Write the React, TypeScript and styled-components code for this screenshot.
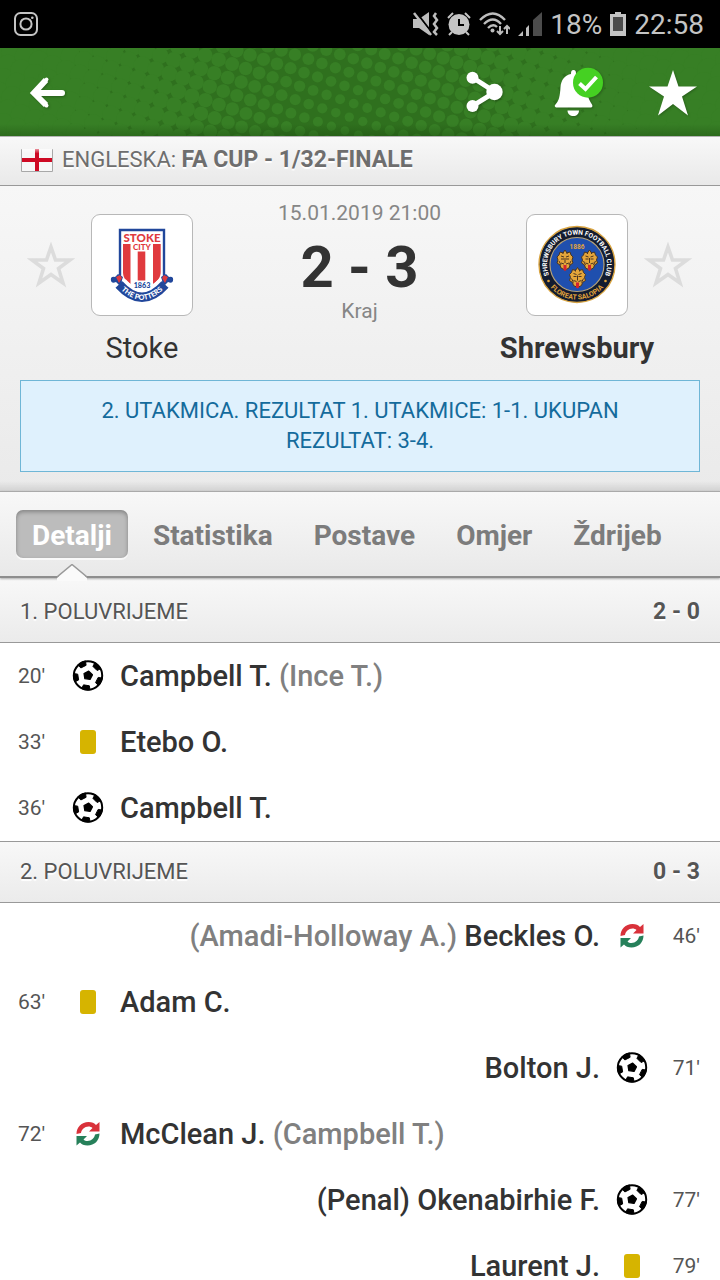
import React from 'react';
import styled, { createGlobalStyle, css } from 'styled-components';

const GlobalStyle = createGlobalStyle`
  *, *::before, *::after { box-sizing: border-box; }
  html, body { margin: 0; background: #fff; }
  body { font-family: Roboto, "Liberation Sans", sans-serif; color: #333; }
  button { font: inherit; color: inherit; background: none; border: 0; padding: 0; cursor: pointer; }
  h1, h2, p, ul { margin: 0; padding: 0; font-weight: inherit; font-size: inherit; }
  ul { list-style: none; }
  svg { display: block; }
`;

const Screen = styled.div`
  display: flex;
  flex-direction: column;
  height: 100vh;
  overflow: hidden;
`;

const Content = styled.main`
  flex: 1;
  min-height: 0;
  overflow-y: auto;
  scrollbar-width: none;
`;

/* ---------- status bar ---------- */

const StatusBar = styled.div`
  flex: none;
  display: flex;
  align-items: center;
  justify-content: space-between;
  height: 48px;
  padding: 0 16px 0 14px;
  background: #000;
  color: #c4c4c4;
  font-size: 28px;
  line-height: 32px;
`;

const StatusGroup = styled.div`
  display: flex;
  align-items: center;
  gap: 8px;
`;

const StatusText = styled.span`
  padding-top: 2px;
`;

/* ---------- header ---------- */

const Header = styled.header`
  flex: none;
  position: relative;
  display: flex;
  align-items: center;
  justify-content: space-between;
  height: 88px;
  padding: 0 23px 0 24px;
  background: #377f25;
  overflow: hidden;
`;

const HeaderPattern = styled.div`
  position: absolute;
  inset: 0;
  svg { width: 100%; height: 100%; }
  &::after {
    content: '';
    position: absolute;
    inset: auto 0 0;
    height: 12px;
    background: linear-gradient(rgba(20, 60, 10, 0), rgba(20, 60, 10, 0.3));
  }
`;

const HeaderActions = styled.div`
  display: flex;
  gap: 46px;
`;

const IconButton = styled.button`
  position: relative;
  width: 48px;
  height: 48px;
  svg { overflow: visible; filter: drop-shadow(1px 1px 1px rgba(0, 0, 0, 0.25)); }
`;

/* ---------- league ---------- */

const League = styled.div`
  display: flex;
  align-items: center;
  gap: 8px;
  height: 50px;
  padding: 0 20px 2px;
  border-top: 1px solid #b4b4b4;
  border-bottom: 1px solid #999;
  background: linear-gradient(#f8f8f8, #e9e9e9);
  color: #6e6e6e;
  font-size: 22px;
  line-height: 28px;
  text-shadow: 0 2px 1px #fff;
  white-space: nowrap;
`;

const LeagueName = styled.b`
  font-size: 23px;
`;

/* ---------- match ---------- */

const Match = styled.section`
  padding: 14px 0 19px;
  background:
    linear-gradient(rgba(0, 0, 0, 0), rgba(0, 0, 0, 0.1)) bottom / 100% 10px no-repeat,
    linear-gradient(#f7f7f7, #eaeaea);
`;

const Teams = styled.div`
  display: flex;
  justify-content: space-between;
  padding: 0 28px 0 27px;
`;

const Team = styled.div<{ $away?: boolean }>`
  display: grid;
  grid-template-columns: ${p => (p.$away ? '102px 48px' : '48px 102px')};
  grid-template-rows: 102px 32px;
  gap: 16px;
  padding-top: 14px;
  align-items: center;
`;

const FavouriteButton = styled.button<{ $away?: boolean }>`
  grid-row: 1;
  grid-column: ${p => (p.$away ? 2 : 1)};
`;

const Crest = styled.div<{ $away?: boolean }>`
  grid-row: 1;
  grid-column: ${p => (p.$away ? 1 : 2)};
  height: 102px;
  border: 1px solid #b8b8b8;
  border-radius: 9px;
  background: #fff;
  overflow: hidden;
`;

const TeamName = styled.span<{ $away?: boolean }>`
  grid-row: 2;
  grid-column: ${p => (p.$away ? 1 : 2)};
  justify-self: center;
  white-space: nowrap;
  font-size: 29px;
  line-height: 32px;
  font-weight: ${p => (p.$away ? 700 : 400)};
`;

const Result = styled.div`
  display: flex;
  flex-direction: column;
  align-items: center;
  color: #868686;
  font-size: 21px;
  line-height: 26px;
`;

const Score = styled.p`
  padding-top: 10px;
  color: #333;
  font-size: 58px;
  font-weight: 700;
  line-height: 62px;
  white-space: nowrap;
`;

const Notice = styled.p`
  margin: 16px 20px 0;
  padding: 15px 60px;
  border: 1px solid #6fb6d6;
  background: #dff1fd;
  color: #146b9c;
  font-size: 22px;
  line-height: 30px;
  text-align: center;
`;

/* ---------- tabs ---------- */

const Tabs = styled.nav`
  position: relative;
  z-index: 1;
  display: flex;
  gap: 9px;
  height: 87px;
  padding: 18px 16px 0;
  border-top: 1px solid #aaa;
  border-bottom: 2px solid #8e8e8e;
  background: linear-gradient(#f8f8f8, #e9e9e9);
  box-shadow: 0 1px 2px rgba(0, 0, 0, 0.3);
`;

const Tab = styled.button<{ $active?: boolean }>`
  position: relative;
  height: 48px;
  padding: 4px 16px 0;
  border-radius: 7px;
  color: #7c7c7c;
  font-size: 28px;
  font-weight: 700;
  line-height: 32px;
  white-space: nowrap;
  ${p =>
    p.$active &&
    css`
      color: #fff;
      background: #bcbcbc;
      box-shadow: inset 0 2px 4px rgba(0, 0, 0, 0.3), 0 2px 0 #f9f9f9;
    `}
`;

const Pointer = styled.svg`
  position: absolute;
  top: 54px;
  left: 50%;
  transform: translateX(-50%);
`;

/* ---------- periods ---------- */

const PeriodHeader = styled.h2<{ $first?: boolean }>`
  display: flex;
  align-items: center;
  justify-content: space-between;
  height: ${p => (p.$first ? 65 : 62)}px;
  padding: ${p => (p.$first ? '4px 20px 0' : '0 20px')};
  ${p => !p.$first && 'border-top: 1px solid #999;'}
  border-bottom: 1px solid #999;
  background: linear-gradient(#f8f8f8, #ebebeb);
  color: #555;
  font-size: 22px;
  line-height: 28px;
  text-shadow: 0 2px 1px #fff;
`;

const PeriodScore = styled.b`
  font-size: 23px;
`;

const Event = styled.li<{ $away?: boolean }>`
  display: flex;
  flex-direction: ${p => (p.$away ? 'row-reverse' : 'row')};
  align-items: center;
  height: 66px;
  padding: 0 20px 0 18px;
  background: #fff;
`;

const Minute = styled.span<{ $away?: boolean }>`
  flex: none;
  width: ${p => (p.$away ? 52 : 54)}px;
  color: #555;
  font-size: 21px;
  line-height: 24px;
  text-align: ${p => (p.$away ? 'right' : 'left')};
`;

const EventIcon = styled.span`
  flex: none;
  display: flex;
  justify-content: center;
  width: 32px;
`;

const YellowCard = styled.span`
  width: 16px;
  height: 24px;
  border-radius: 3px;
  background: #d6b400;
`;

const Player = styled.span`
  margin: 0 16px;
  color: #333;
  font-size: 29px;
  font-weight: 500;
  line-height: 36px;
  white-space: nowrap;
`;

const Muted = styled.span`
  color: #808080;
`;

/* ---------- drawings ---------- */

const PITCH = 14.2;
const TILT = (18 * Math.PI) / 180;

const dots: { x: number; y: number; r: number }[] = [];
for (let i = -8; i < 60; i++) {
  for (let j = -20; j < 16; j++) {
    const x = 250 + PITCH * ((i - 20) * Math.cos(TILT) - j * Math.sin(TILT));
    const y = 7 + PITCH * ((i - 20) * Math.sin(TILT) + j * Math.cos(TILT));
    if (x < -12 || x > 732 || y < -12 || y > 100) continue;
    const distance = Math.hypot(x - 350, y - 88);
    dots.push({ x, y, r: Math.min(11, 4.3 + distance * 0.0195) });
  }
}

const Halftone = () => (
  <svg viewBox="0 0 720 88" preserveAspectRatio="xMidYMid slice" aria-hidden="true">
    <rect x="50" width="620" height="88" fill="#2f701e" />
    {dots.map((d, i) => (
      <circle key={i} cx={d.x.toFixed(1)} cy={d.y.toFixed(1)} r={d.r.toFixed(1)} fill="#377f25" />
    ))}
  </svg>
);

const InstagramIcon = () => (
  <svg width="24" height="24" viewBox="0 0 24 24" fill="none" stroke="#c4c4c4" strokeWidth="2">
    <rect x="1" y="1" width="22" height="22" rx="5.5" />
    <circle cx="12" cy="12" r="5.6" />
    <circle cx="18.3" cy="5.7" r="1.3" fill="#c4c4c4" stroke="none" />
  </svg>
);

const MuteIcon = () => (
  <svg width="26" height="24" viewBox="0 0 26 24" fill="#bdbdbd">
    <path d="M0 7H6L16 0V23L6 16H0Z" />
    <path d="M3 0L20 22" stroke="#000" strokeWidth="2" />
    <path d="M1 1L18 23" stroke="#bdbdbd" strokeWidth="2.500" />
    <path d="M23 1L21 4L24 8L21 12L24 16L21 20L24 23" fill="none" stroke="#bdbdbd" strokeWidth="2.500" />
  </svg>
);

const AlarmIcon = () => (
  <svg width="24" height="24" viewBox="0 0 24 24" fill="none" stroke="#c4c4c4" strokeWidth="2">
    <circle cx="12" cy="12.5" r="10.5" fill="#c4c4c4" stroke="none" />
    <path d="M1 6L6 1M23 6L18 1M5 20L2 23M19 20L22 23" />
    <path d="M12 7V13H17" stroke="#000" />
  </svg>
);

const WifiIcon = () => (
  <svg width="31" height="24" viewBox="0 0 31 24" fill="none" stroke="#bdbdbd" strokeWidth="2.4">
    <path d="M1 8Q14 -5 26 8M5 12Q14 3 22 12M9 16Q14 11 18 15" />
    <circle cx="13.5" cy="18.5" r="2" fill="#bdbdbd" stroke="none" />
    <path d="M21 14V22M18 19L21 22L24 19M28 22V14M25 17L28 14L31 17" strokeWidth="2" />
  </svg>
);

const SignalIcon = () => (
  <svg width="24" height="24" viewBox="0 0 24 24">
    <path d="M0 24L5 19V24ZM8 24V16L11 13V24Z" fill="#bdbdbd" />
    <path d="M15 24V8L24 0V24Z" fill="#4c4c4c" />
  </svg>
);

const BatteryIcon = () => (
  <svg width="16" height="24" viewBox="0 0 16 24">
    <path d="M0 2H5V0H11V2H16V24H0Z" fill="#c4c4c4" />
    <rect x="3" y="5" width="10" height="14" fill="#4c4c4c" />
  </svg>
);

const BackIcon = () => (
  <svg width="48" height="48" viewBox="0 0 48 48" fill="none" stroke="#fff" strokeWidth="6" strokeLinecap="round" strokeLinejoin="round">
    <path d="M22 12L10 25L22 37" strokeLinecap="butt" strokeLinejoin="miter" />
    <path d="M22.5 11.5L10 25L22.5 37.5" strokeWidth="4" />
    <path d="M11 25H38" />
  </svg>
);

const ShareIcon = () => (
  <svg width="48" height="48" viewBox="0 0 48 48" fill="#fff">
    <path d="M11.5 9.5L34 24L11.5 38" fill="none" stroke="#fff" strokeWidth="5" />
    <circle cx="11.5" cy="9.7" r="6" />
    <circle cx="33.5" cy="24" r="8.2" />
    <circle cx="11.5" cy="38" r="6" />
  </svg>
);

const BellIcon = () => (
  <svg width="48" height="48" viewBox="0 0 48 48" fill="#fff">
    <path d="M18.5 2C20.5 2 21 3 21 6C27 7 31 11 31.500 18C32 28 34 32 37 36.500C38 38.500 37 39.500 36 39.500H2C0 39.500 -1 38 0.500 36.500C4 33 5 28 5.500 19C6 12 10 7 16 6C16 3 16.500 2 18.500 2Z" />
    <path d="M12.500 42.500H24C24 46 21.500 48 18.500 48C15 48 12.500 46 12.500 42.500Z" />
    <circle cx="33" cy="14.700" r="15" fill="#45d122" />
    <path d="M24.500 15.500L30.500 21L41.500 9" fill="none" stroke="#fff" strokeWidth="4" />
  </svg>
);

const StarIcon = () => (
  <svg width="48" height="48" viewBox="0 0 48 48" fill="#fff">
    <path d="M24 2L29.500 18.500H48L33 28.500L39 47.500L24 36L9 47.500L15 28.500L0 18.500H18.500Z" />
  </svg>
);

const StarOutline = () => (
  <svg width="48" height="48" viewBox="0 0 48 48" fill="none" stroke="#dcdcdc" strokeWidth="3.600">
    <path d="M24 6L28.500 19H43L31.500 27.500L36 42L24 33.500L12 42L16.500 27.500L5 19H19.500Z" />
  </svg>
);

const EnglandFlag = () => (
  <svg width="34" height="26" viewBox="0 0 34 26">
    <defs>
      <linearGradient id="gloss" x1="0" x2="0" y1="0" y2="1">
        <stop offset="0" stopColor="#fff" stopOpacity="0.55" />
        <stop offset="0.5" stopColor="#fff" stopOpacity="0" />
      </linearGradient>
    </defs>
    <rect x="1" y="2" width="32" height="23" rx="1" fill="#a8a8a8" />
    <rect x="2" y="2" width="30" height="22" fill="#f7f7f7" />
    <path d="M15 2H19V11H32V15H19V24H15V15H2V11H15Z" fill="#ce0a24" />
    <rect x="2" y="2" width="30" height="9" fill="url(#gloss)" />
  </svg>
);

const StokeCrest = () => (
  <svg width="100" height="100" viewBox="1 1 100 100" fontFamily="Lato, sans-serif" fontWeight="900">
    <path d="M29 16H73V63C73 76 62 84 51 86C40 84 29 76 29 63Z" fill="#fff" stroke="#21479b" strokeWidth="2.4" />
    <path d="M32 30H39.500V70C34 66 32 63 32 58ZM46.700 37.500H54.300V66.500H46.700ZM62 30H69.700V58C69.700 63 67 67 62 70Z" fill="#e03a3e" />
    <text x="51" y="28" fontSize="11.500" textAnchor="middle" fill="#e03a3e">STOKE</text>
    <text x="51" y="36" fontSize="8" textAnchor="middle" fill="#e03a3e">CITY</text>
    <path d="M20 67Q19 62 24 63L27 60L32 63L29 72L25 68Q21 70 20 67ZM82 67Q83 62 78 63L75 60L70 63L73 72L77 68Q81 70 82 67Z" fill="#21479b" />
    <path d="M25 63L29 61L31 64L28 69ZM77 63L73 61L71 64L74 69Z" fill="#e03a3e" />
    <path d="M30.500 69Q51 92 71.500 69" fill="none" stroke="#fff" strokeWidth="11" />
    <path d="M28 70.500Q51 96 74 70.500" fill="none" stroke="#21479b" strokeWidth="9.500" />
    <path id="ribbonText" d="M24.500 70Q51 101.500 77.500 70" fill="none" />
    <text fontSize="7.200" fill="#fff" textAnchor="middle">
      <textPath href="#ribbonText" startOffset="50%">THE POTTERS</textPath>
    </text>
    <text x="51" y="74" fontSize="7.200" textAnchor="middle" fill="#21479b">1863</text>
  </svg>
);

const LionFace = ({ x, y }: { x: number; y: number }) => (
  <g transform={`translate(${x} ${y})`}>
    <path d="M-5 -8L-2 -7L0 -10L2 -7L5 -8L6 -5L8 -3L7 0L8 3L5 5L4 8L0 10L-4 8L-5 5L-8 3L-7 0L-8 -3L-6 -5Z" fill="#e4a53a" stroke="#4a3522" strokeWidth="1" />
    <path d="M-4 -4L-1 -3M4 -4L1 -3M-4 -1H-1M4 -1H1M0 -2V3M-4 3L-1 4M4 3L1 4M-6 1L-4 5M6 1L4 5M-2 -6V-8M2 -6V-8" stroke="#4a3522" strokeWidth="1" />
    <path d="M-1.500 5H1.500V10L0 11L-1.500 10Z" fill="#d2232f" />
  </g>
);

const ShrewsburyCrest = () => (
  <svg width="100" height="100" viewBox="1 1 100 100" fontFamily="Roboto, sans-serif" fontWeight="700">
    <circle cx="51" cy="50.500" r="38" fill="#131c30" stroke="#d9a441" strokeWidth="1.400" />
    <circle cx="51" cy="50.500" r="27" fill="#1f4fae" stroke="#b5a27a" strokeWidth="1.200" />
    <path id="ringTop" d="M23.500 62.500A30 30 0 1 1 78.500 62.500" fill="none" />
    <path id="ringBottom" d="M17.600 61A35 35 0 0 0 84.400 61" fill="none" />
    <text fontSize="6.600" fill="#fff" textAnchor="middle">
      <textPath href="#ringTop" startOffset="50%">SHREWSBURY TOWN FOOTBALL CLUB</textPath>
    </text>
    <text fontSize="7" fill="#e4a53a" textAnchor="middle">
      <textPath href="#ringBottom" startOffset="50%">FLOREAT SALOPIA</textPath>
    </text>
    <circle cx="22.500" cy="67" r="1.300" fill="#e4a53a" />
    <circle cx="79.500" cy="67" r="1.300" fill="#e4a53a" />
    <text x="51" y="34.500" fontSize="6.500" textAnchor="middle" fill="#e4a53a">1886</text>
    <LionFace x={39} y={46} />
    <LionFace x={63.500} y={46} />
    <LionFace x={51.500} y={63.500} />
  </svg>
);

const pentagon = (cx: number, cy: number, r: number, start: number) =>
  [0, 1, 2, 3, 4]
    .map(k => {
      const a = ((start + k * 72) * Math.PI) / 180;
      return `${(cx + r * Math.cos(a)).toFixed(2)},${(cy + r * Math.sin(a)).toFixed(2)}`;
    })
    .join(' ');

const BallIcon = () => (
  <svg width="32" height="32" viewBox="0 0 32 32" role="img" aria-label="Gol">
    <defs>
      <clipPath id="ballClip">
        <circle cx="16" cy="15.500" r="15" />
      </clipPath>
    </defs>
    <circle cx="16" cy="15.500" r="14.200" fill="#fff" stroke="#000" strokeWidth="2" />
    <g clipPath="url(#ballClip)" stroke="#000" strokeLinejoin="round">
      <polygon points={pentagon(16, 15.5, 4.4, 63)} strokeWidth="1.400" />
      {[99, 171, 243, 315, 27].map(angle => {
        const a = (angle * Math.PI) / 180;
        return (
          <polygon
            key={angle}
            points={pentagon(16 + 14 * Math.cos(a), 15.5 + 14 * Math.sin(a), 5, angle)}
            strokeWidth="1"
          />
        );
      })}
    </g>
  </svg>
);

const SWAP = 'M0 12C0 5 5 0 12 0C15.500 0 18 1 19.500 3L23 0V9.500H12.500L16 6C15 5 13.500 4.500 12 4.500C8 4.500 5 7.500 4.500 11Z';

const SubstitutionIcon = () => (
  <svg width="24" height="24" viewBox="-0.5 0 24 24" role="img" aria-label="Izmjena">
    <path d={SWAP} fill="#d9313a" />
    <path d={SWAP} fill="#26805a" transform="rotate(180 11.500 11.700)" />
  </svg>
);

/* ---------- data ---------- */

type Kind = 'goal' | 'yellow' | 'sub';
type MatchEvent = { minute: number; kind: Kind; player: string; before?: string; after?: string; away?: boolean };

const periods: { title: string; score: string; events: MatchEvent[] }[] = [
  {
    title: '1. POLUVRIJEME',
    score: '2 - 0',
    events: [
      { minute: 20, kind: 'goal', player: 'Campbell T.', after: '(Ince T.)' },
      { minute: 33, kind: 'yellow', player: 'Etebo O.' },
      { minute: 36, kind: 'goal', player: 'Campbell T.' },
    ],
  },
  {
    title: '2. POLUVRIJEME',
    score: '0 - 3',
    events: [
      { minute: 46, kind: 'sub', player: 'Beckles O.', before: '(Amadi-Holloway A.)', away: true },
      { minute: 63, kind: 'yellow', player: 'Adam C.' },
      { minute: 71, kind: 'goal', player: 'Bolton J.', away: true },
      { minute: 72, kind: 'sub', player: 'McClean J.', after: '(Campbell T.)' },
      { minute: 77, kind: 'goal', player: '(Penal) Okenabirhie F.', away: true },
      { minute: 79, kind: 'yellow', player: 'Laurent J.', away: true },
    ],
  },
];

const tabs = ['Detalji', 'Statistika', 'Postave', 'Omjer', 'Ždrijeb'];

const icons: Record<Kind, React.ReactNode> = {
  goal: <BallIcon />,
  yellow: <YellowCard role="img" aria-label="Žuti karton" />,
  sub: <SubstitutionIcon />,
};

export default function App() {
  return (
    <>
      <GlobalStyle />
      <Screen>
        <StatusBar>
          <InstagramIcon />
          <StatusGroup>
            <MuteIcon />
            <AlarmIcon />
            <WifiIcon />
            <SignalIcon />
            <StatusText>18%</StatusText>
            <BatteryIcon />
            <StatusText>22:58</StatusText>
          </StatusGroup>
        </StatusBar>
        <Header>
          <HeaderPattern><Halftone /></HeaderPattern>
          <IconButton aria-label="Natrag"><BackIcon /></IconButton>
          <HeaderActions>
            <IconButton aria-label="Podijeli"><ShareIcon /></IconButton>
            <IconButton aria-label="Obavijesti"><BellIcon /></IconButton>
            <IconButton aria-label="Omiljeno"><StarIcon /></IconButton>
          </HeaderActions>
        </Header>
        <Content>
          <League>
            <EnglandFlag />
            <span>ENGLESKA: <LeagueName>FA CUP - 1/32-FINALE</LeagueName></span>
          </League>
          <Match>
            <Teams>
              <Team>
                <FavouriteButton aria-label="Prati Stoke"><StarOutline /></FavouriteButton>
                <Crest><StokeCrest /></Crest>
                <TeamName>Stoke</TeamName>
              </Team>
              <Result>
                <p>15.01.2019 21:00</p>
                <Score>2 - 3</Score>
                <p>Kraj</p>
              </Result>
              <Team $away>
                <Crest $away><ShrewsburyCrest /></Crest>
                <FavouriteButton $away aria-label="Prati Shrewsbury"><StarOutline /></FavouriteButton>
                <TeamName $away>Shrewsbury</TeamName>
              </Team>
            </Teams>
            <Notice>2. UTAKMICA. REZULTAT 1. UTAKMICE: 1-1. UKUPAN REZULTAT: 3-4.</Notice>
          </Match>
          <Tabs>
            {tabs.map((label, i) => (
              <Tab key={label} $active={i === 0}>
                {label}
                {i === 0 && (
                  <Pointer width="30" height="17" viewBox="0 0 30 17" aria-hidden="true">
                    <path d="M0 14L15 0L30 14V17H0Z" fill="#fafafa" />
                    <path d="M0 13L15 0.500L30 13" fill="none" stroke="#999" strokeWidth="1.500" />
                  </Pointer>
                )}
              </Tab>
            ))}
          </Tabs>
          {periods.map((period, i) => (
            <section key={period.title}>
              <PeriodHeader $first={i === 0}>
                <span>{period.title}</span>
                <PeriodScore>{period.score}</PeriodScore>
              </PeriodHeader>
              <ul>
                {period.events.map(e => (
                  <Event key={e.minute} $away={e.away}>
                    <Minute $away={e.away}>{e.minute}'</Minute>
                    <EventIcon>{icons[e.kind]}</EventIcon>
                    <Player>
                      {e.before && <Muted>{e.before} </Muted>}
                      {e.player}
                      {e.after && <Muted> {e.after}</Muted>}
                    </Player>
                  </Event>
                ))}
              </ul>
            </section>
          ))}
        </Content>
      </Screen>
    </>
  );
}
